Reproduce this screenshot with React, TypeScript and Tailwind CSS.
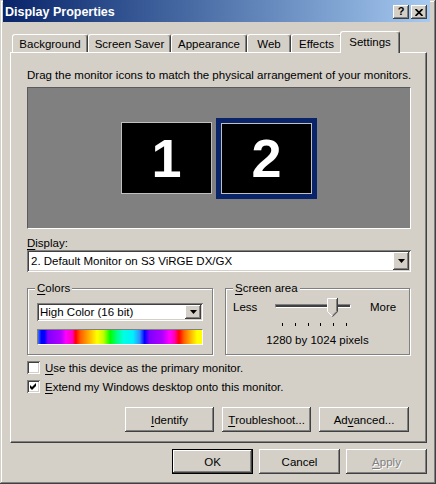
import React from "react";

// classic win2k bevels
const raised =
  "shadow-[inset_-1px_-1px_0_#404040,inset_1px_1px_0_#ffffff,inset_-2px_-2px_0_#808080,inset_2px_2px_0_#d4d0c8]";
const sunken =
  "shadow-[inset_1px_1px_0_#808080,inset_-1px_-1px_0_#ffffff,inset_2px_2px_0_#404040,inset_-2px_-2px_0_#d4d0c8]";

function Key({ children }: { children: React.ReactNode }) {
  return <span className="underline underline-offset-[2px]">{children}</span>;
}

function PushButton({
  children,
  width,
  primary,
  disabled,
}: {
  children: React.ReactNode;
  width: string;
  primary?: boolean;
  disabled?: boolean;
}) {
  return (
    <button
      className={`${width} h-[25px] shrink-0 bg-[#d4d0c8] ${primary ? "border border-black" : ""}`}
    >
      <span
        className={`flex w-full h-full items-center justify-center leading-[14px] ${raised} ${
          disabled ? "text-[#808080] [text-shadow:1px_1px_0_#ffffff]" : "text-black"
        }`}
      >
        {children}
      </span>
    </button>
  );
}

function DropButton({ className }: { className: string }) {
  return (
    <div className={`shrink-0 flex items-center justify-center bg-[#d4d0c8] ${raised} ${className}`}>
      <svg width="7" height="4" viewBox="0 0 7 4">
        <path d="M0 0h7L3.5 4z" fill="#000" />
      </svg>
    </div>
  );
}

function CheckBox({ checked, children }: { checked?: boolean; children: React.ReactNode }) {
  return (
    <div className="flex items-center h-[13px]">
      <div className={`w-[13px] h-[13px] bg-white flex items-center justify-center ${sunken}`}>
        {checked && (
          <svg width="7" height="7" viewBox="0 0 7 7">
            <path d="M0 2L2 4L6 0V3L2 7L0 5Z" fill="#000" />
          </svg>
        )}
      </div>
      <span className="ml-[5px] leading-[14px]">{children}</span>
    </div>
  );
}

const tabs = [
  { label: "Background", w: "w-[76px]" },
  { label: "Screen Saver", w: "w-[83px]" },
  { label: "Appearance", w: "w-[76px]" },
  { label: "Web", w: "w-[44px]" },
  { label: "Effects", w: "w-[51px]" },
];

const ticks = [0, 1, 2, 3, 4, 5];

export default function App() {
  return (
    <div
      className={`w-[436px] h-[484px] bg-[#d4d0c8] text-black text-[11.5px] font-['Liberation_Sans',Arial,sans-serif] flex flex-col overflow-hidden shadow-[inset_-1px_-1px_0_#404040,inset_1px_1px_0_#d4d0c8,inset_-2px_-2px_0_#808080,inset_2px_2px_0_#ffffff]`}
    >
      {/* Title bar */}
      <div className="ml-[3px] w-[427px] h-[22px] shrink-0 flex items-center bg-gradient-to-r from-[#0a246a] to-[#a6caf0] pl-[2px] pr-[3px]">
        <span className="text-white font-bold text-[12.5px] leading-[14px] mt-[1px]">Display Properties</span>
        <div className="ml-auto flex gap-[2px] mt-[2px]">
          <div className={`w-[16px] h-[14px] bg-[#d4d0c8] flex items-center justify-center ${raised}`}>
            <span className="font-bold text-[11px] leading-[11px] mt-[-1px]">?</span>
          </div>
          <div className={`w-[16px] h-[14px] bg-[#d4d0c8] flex items-center justify-center ${raised}`}>
            <svg width="8" height="7" viewBox="0 0 8 7">
              <path d="M0.5 0L7.5 7M7.5 0L0.5 7" stroke="#000" strokeWidth="1.7" />
            </svg>
          </div>
        </div>
      </div>

      {/* Tabs */}
      <div className="h-[30px] shrink-0 flex items-end pl-[12px]">
        {tabs.map((t) => (
          <div
            key={t.label}
            className={`${t.w} h-[18px] flex items-center justify-center border-l border-t border-white border-r border-r-[#404040] rounded-t-[3px] shadow-[inset_-1px_0_0_#808080] leading-[14px] pt-[1px]`}
          >
            {t.label}
          </div>
        ))}
        <div className="relative z-10 -ml-[2px] mb-[-1px] w-[60px] h-[22px] bg-[#d4d0c8] flex items-center justify-center border-l border-t border-white border-r border-r-[#404040] rounded-t-[3px] shadow-[inset_-1px_0_0_#808080] leading-[14px] pb-[1px]">
          Settings
        </div>
      </div>

      {/* Tab panel */}
      <div className="ml-[10px] w-[417px] h-[391px] shrink-0 border-l border-t border-white border-r border-b border-r-[#404040] border-b-[#404040] shadow-[inset_-1px_-1px_0_#808080] flex flex-col pl-[16px] pr-[15px] pt-[15px]">
        <div className="h-[14px] leading-[14px] whitespace-nowrap">
          Drag the monitor icons to match the physical arrangement of your monitors.
        </div>

        <div className="mt-[5px] h-[142px] shrink-0 bg-[#808080] border-t border-l border-[#5a5a5a] border-b border-r border-b-white border-r-white flex items-center justify-center gap-[4px]">
          <div className="w-[91px] h-[72px] bg-black border border-[#c0c0c0] flex items-center justify-center">
            <span className="text-white font-bold text-[54px] leading-none">1</span>
          </div>
          <div className="border-[5px] border-[#0a246a]">
            <div className="w-[91px] h-[71px] bg-black border border-[#c0c0c0] flex items-center justify-center">
              <span className="text-white font-bold text-[54px] leading-none">2</span>
            </div>
          </div>
        </div>

        <div className="mt-[7px] h-[14px] leading-[14px]">
          <Key>D</Key>isplay:
        </div>
        <div className={`h-[22px] shrink-0 bg-white flex items-center p-[2px] ${sunken}`}>
          <span className="flex-1 pl-[2px] leading-[14px] whitespace-nowrap">
            2. Default Monitor on S3 ViRGE DX/GX
          </span>
          <DropButton className="w-[16px] h-[18px]" />
        </div>

        {/* Group boxes */}
        <div className="mt-[9px] flex gap-[12px]">
          <fieldset className="w-[186px] h-[74px] border border-[#808080] shadow-[inset_1px_1px_0_#ffffff,1px_1px_0_#ffffff] px-[7px]">
            <legend className="px-[2px] leading-[14px] bg-[#d4d0c8]">
              <Key>C</Key>olors
            </legend>
            <div className="mx-[2px] mt-[8px] flex flex-col">
              <div className={`h-[18px] bg-white flex items-center p-[2px] ${sunken}`}>
                <span className="flex-1 pl-[1px] leading-[14px] whitespace-nowrap">High Color (16 bit)</span>
                <DropButton className="w-[16px] h-[14px]" />
              </div>
              <div className="mt-[8px] h-[16px] border-t border-l border-[#808080] border-b border-r border-b-white border-r-white">
                <div className="w-full h-full bg-[linear-gradient(to_right,#3c78f0_0%,#0000ff_2%,#0000ff_4%,#8000ff_6%,#b000ff_14%,#ff00ff_17%,#ff00c0_21%,#ff0000_23%,#ff6000_26%,#ffa000_30%,#ffff00_36%,#c0ff00_40%,#00ff00_44%,#00ff80_48%,#00ffe0_52%,#00f0ff_58%,#3090ff_62%,#0000ff_65%,#8000ff_68%,#b000ff_76%,#ff00ff_80%,#ff00c0_83%,#ff0000_86%,#ff6000_89%,#ffa000_92%,#ffff00_97%)]" />
              </div>
            </div>
          </fieldset>

          <fieldset className="w-[185px] h-[74px] border border-[#808080] shadow-[inset_1px_1px_0_#ffffff,1px_1px_0_#ffffff] px-[7px]">
            <legend className="px-[2px] leading-[14px] bg-[#d4d0c8]">
              <Key>S</Key>creen area
            </legend>
            <div className="mt-[3px] flex items-start">
              <span className="w-[42px] mt-[2px] leading-[14px]">Less</span>
              <div className="relative w-[76px] h-[28px]">
                <div className="mt-[6px] h-[4px] border-t border-l border-[#808080] border-b border-r border-b-white border-r-white bg-[#404040]" />
                <div className="mt-[15px] flex justify-between pl-[7px] pr-[4px]">
                  {ticks.map((t) => (
                    <div key={t} className="w-px h-[3px] bg-black" />
                  ))}
                </div>
                <svg
                  className="absolute left-[52px] top-0"
                  width="11"
                  height="19"
                  viewBox="0 0 11 19"
                >
                  <path d="M0.5 0.5H10.5V13.5L5.5 18.5L0.5 13.5Z" fill="#d4d0c8" />
                  <path d="M0.5 13.5V0.5H10" stroke="#fff" fill="none" />
                  <path d="M0.5 13.5L5 18" stroke="#fff" fill="none" />
                  <path d="M10.5 0V13.7L5.5 18.7" stroke="#404040" fill="none" />
                  <path d="M9.5 1V13.3L5.5 17.3" stroke="#808080" fill="none" />
                </svg>
              </div>
              <span className="ml-[19px] mt-[2px] leading-[14px]">More</span>
            </div>
            <div className="mt-[7px] text-center leading-[14px]">1280 by 1024 pixels</div>
          </fieldset>
        </div>

        <div className="mt-[6px] flex flex-col gap-[6px]">
          <CheckBox>
            <Key>U</Key>se this device as the primary monitor.
          </CheckBox>
          <CheckBox checked>
            <Key>E</Key>xtend my Windows desktop onto this monitor.
          </CheckBox>
        </div>

        <div className="mt-[14px] mr-[2px] flex justify-end gap-[8px]">
          <PushButton width="w-[89px]">
            <Key>I</Key>dentify
          </PushButton>
          <PushButton width="w-[89px]">
            <Key>T</Key>roubleshoot...
          </PushButton>
          <PushButton width="w-[90px]">
            Ad<Key>v</Key>anced...
          </PushButton>
        </div>
      </div>

      {/* Dialog buttons */}
      <div className="mt-[6px] pr-[9px] flex justify-end gap-[6px]">
        <PushButton width="w-[81px]" primary>
          OK
        </PushButton>
        <PushButton width="w-[81px]">Cancel</PushButton>
        <PushButton width="w-[81px]" disabled>
          <Key>A</Key>pply
        </PushButton>
      </div>
    </div>
  );
}
